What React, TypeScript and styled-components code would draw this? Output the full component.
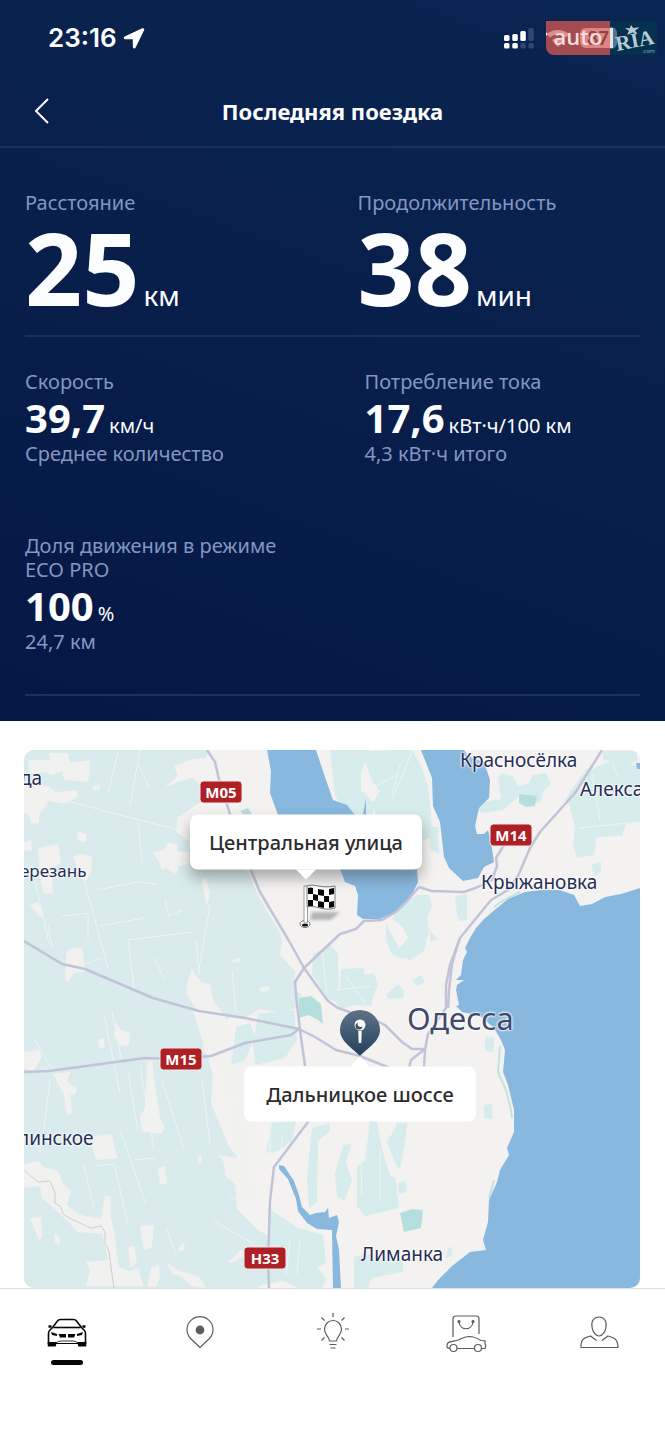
import React from "react";
import styled, { createGlobalStyle } from "styled-components";

const GlobalStyle = createGlobalStyle`
  *, *::before, *::after { box-sizing: border-box; }
  body {
    margin: 0;
    background: #ffffff;
    font-family: "Noto Sans", "Open Sans", sans-serif;
    -webkit-font-smoothing: antialiased;
  }
`;

const Page = styled.div`
  display: flex;
  flex-direction: column;
  min-height: 100vh;
`;

const Hero = styled.section`
  display: flex;
  flex-direction: column;
  padding-bottom: 25px;
  background: linear-gradient(200deg, #092551 0%, #091f4b 45%, #051745 100%);
  color: #fbfdff;
`;

const StatusBar = styled.div`
  display: flex;
  align-items: center;
  justify-content: space-between;
  height: 76px;
  padding: 0 8px 0 48px;
`;

const Clock = styled.div`
  display: flex;
  align-items: center;
  gap: 6px;
  font: 600 26px/32px Inter, Roboto, sans-serif;
`;

const StatusIcons = styled.div`
  display: flex;
  align-items: center;
  gap: 12px;
`;

const Watermark = styled.div`
  display: flex;
  height: 34px;
`;

const AutoPlate = styled.div`
  position: relative;
  display: flex;
  align-items: center;
  justify-content: center;
  width: 64px;
  background: #a24b50;
  border-radius: 0 0 0 8px;
  color: #f3dcdc;
  font: 600 22px/30px "Open Sans", sans-serif;

  svg {
    position: absolute;
    inset: 0;
  }
  span {
    position: relative;
    bottom: 2px;
  }
`;

const RiaPlate = styled.div`
  width: 47px;
  background: #053050;
`;

const Header = styled.header`
  display: grid;
  grid-template-columns: 32px 1fr 32px;
  align-items: center;
  height: 72px;
  padding: 0 26px;
  border-bottom: 2px solid #1d3159;
`;

const BackButton = styled.button`
  display: flex;
  justify-content: center;
  padding: 4px 0;
  border: 0;
  background: none;
  color: inherit;
`;

const Title = styled.h1`
  margin: 0;
  text-align: center;
  font-size: 22px;
  line-height: 32px;
  font-weight: 700;
`;

const StatGrid = styled.div<{ $gap: number; $top: number; $bottom: number }>`
  display: grid;
  grid-template-columns: 1fr 1fr;
  column-gap: ${(p) => p.$gap}px;
  row-gap: 68px;
  margin: 0 25px;
  padding: ${(p) => p.$top}px 0 ${(p) => p.$bottom}px;
  border-bottom: 2px solid #1b305c;
`;

const Stat = styled.div`
  display: flex;
  flex-direction: column;
`;

const StatLabel = styled.h2`
  margin: 0;
  font-size: 20px;
  line-height: 24px;
  font-weight: 400;
  color: #8496c2;
`;

const StatNote = styled.p`
  margin: 0;
  font-size: 20px;
  line-height: 24px;
  color: #8496c2;
`;

const StatValue = styled.div<{ $large?: boolean }>`
  display: flex;
  align-items: baseline;
  gap: 4px;
  white-space: nowrap;
  line-height: ${(p) => (p.$large ? 104 : 48)}px;

  strong {
    font-size: ${(p) => (p.$large ? 100 : 40)}px;
    font-weight: 700;
  }
  span {
    font-size: ${(p) => (p.$large ? 28 : 20)}px;
    line-height: 24px;
  }
`;

const MapSection = styled.main`
  padding: 29px 25px 0 24px;
`;

const MapFrame = styled.div`
  position: relative;
  aspect-ratio: 616 / 538;
  overflow: hidden;
  border-radius: 10px;
  background: #f3f2f1;

  > svg {
    display: block;
    width: 100%;
    height: 100%;
  }
`;

const MapItem = styled.div<{ $x: number; $y: number }>`
  position: absolute;
  left: ${(p) => ((p.$x - 24) / 616) * 100}%;
  top: ${(p) => ((p.$y - 750) / 538) * 100}%;
  white-space: nowrap;
`;

const Place = styled(MapItem)<{ $size?: number }>`
  transform: translateY(-50%);
  font-size: ${(p) => p.$size ?? 19}px;
  line-height: ${(p) => (p.$size === 31 ? 40 : 26)}px;
  color: ${(p) => (p.$size === 31 ? "#43496a" : "#272d55")};
  text-shadow: 0 0 2px #fff, 0 0 2px #fff, 0 0 3px #fff;
`;

const RoadBadge = styled(MapItem)`
  transform: translate(-50%, -50%);
  width: 43px;
  border: 1px solid #f4e9ea;
  border-radius: 4px;
  background: #ae2025;
  color: #ffffff;
  text-align: center;
  font-size: 15px;
  line-height: 21px;
  font-weight: 700;
`;

const Callout = styled(MapItem)<{ $up?: boolean }>`
  transform: translate(-50%, -50%);
  min-width: 232px;
  padding: 0 16px;
  border-radius: 8px;
  background: #ffffff;
  color: #2c2c2e;
  text-align: center;
  font-size: 20px;
  line-height: 55px;
  font-weight: 500;
  box-shadow: ${(p) => (p.$up ? "none" : "0 8px 14px rgba(60, 60, 60, 0.4)")};

  &::after {
    content: "";
    position: absolute;
    left: 50%;
    ${(p) => (p.$up ? "bottom" : "top")}: 100%;
    margin-left: -10px;
    border: 10px solid transparent;
    border-${(p) => (p.$up ? "bottom" : "top")}-color: #ffffff;
    border-${(p) => (p.$up ? "top" : "bottom")}: 0;
  }
`;

const TabBar = styled.nav`
  display: grid;
  grid-template-columns: repeat(5, 1fr);
  flex: 1;
  min-height: 100px;
  padding-top: 21px;
  border-top: 1px solid #dddddf;
  background: #ffffff;
`;

const Tab = styled.a<{ $active?: boolean }>`
  display: flex;
  flex-direction: column;
  align-items: center;
  gap: 6px;
  color: ${(p) => (p.$active ? "#060606" : "#5c5c5c")};

  &::after {
    content: "";
    width: 32px;
    height: 5px;
    border-radius: 3px;
    background: ${(p) => (p.$active ? "#060606" : "transparent")};
  }
`;

const LocationArrow = () => (
  <svg width="22" height="22" viewBox="0 0 22 22" aria-hidden="true">
    <path
      d="M19.500 2 2 10.200c-.8.4-.6 1.300.3 1.300l8.200.1.1 8.400c0 .9 1 1.100 1.400.2L20.400 3c.4-.8-.2-1.300-.9-1Z"
      fill="#fff"
      stroke="#fff"
      strokeWidth="1.500"
      strokeLinejoin="round"
    />
  </svg>
);

const Signal = () => (
  <svg width="32" height="22" viewBox="0 0 32 22" aria-hidden="true">
    <g fill="#fff">
      <rect x="2" y="8" width="5.500" height="6" rx="1.500" />
      <rect x="10.300" y="7" width="5.500" height="7" rx="1.500" />
      <rect x="18.300" y="4" width="5.500" height="10" rx="1.500" />
      <rect x="2" y="16" width="5.500" height="5.500" rx="1.500" />
      <rect x="10.300" y="16" width="5.500" height="5.500" rx="1.500" />
    </g>
    <g fill="#31476f">
      <rect x="26.300" y="1" width="5.500" height="13" rx="1.500" />
      <rect x="18.300" y="16" width="5.500" height="5.500" rx="1.500" />
      <rect x="26.300" y="16" width="5.500" height="5.500" rx="1.500" />
    </g>
  </svg>
);

const ParkingAuto = () => (
  <AutoPlate>
    <svg width="64" height="34" viewBox="0 0 64 34" aria-hidden="true">
      <path d="M1 13a17 17 0 0 1 22 0l-3 3.400a12.500 12.500 0 0 0-16 0ZM6 19a9.500 9.500 0 0 1 12 0l-6 7Z" fill="#e08d8e" />
      <rect x="34" y="7" width="34" height="20" rx="6" fill="#dc8583" />
      <text x="41" y="24" fill="#963f40" fontFamily="Inter" fontWeight="600" fontSize="18">87</text>
      <circle cx="0" cy="13" r="1.500" fill="#fff" />
    </svg>
    <span>auto</span>
  </AutoPlate>
);

const Ria = () => (
  <RiaPlate>
    <svg width="47" height="34" viewBox="0 0 47 34" role="img" aria-label="RIA.com">
      <path d="M0 6h1c4 0 6 3 6 6v10c0 3-3 6-6 6H0Z" fill="#58738a" />
      <rect x="0" y="7" width="3" height="20" fill="#dfe8ec" />
      <text x="7" y="30" transform="rotate(-11 7 30)" fill="#b5cbd3" fontFamily="Liberation Serif" fontWeight="700" fontSize="21">RIA</text>
      <path d="m21 4 2.200 3 6.300-.7-4.500 3.500 2.500 3-5-1.300-5.500 2.500 2-4.200-4-2.800 4.800.2Z" fill="#b5cbd3" />
      <text x="32" y="32" fill="#8fabb9" fontFamily="Open Sans" fontStyle="italic" fontSize="6">.com</text>
    </svg>
  </RiaPlate>
);

const fieldPatches = [
  "M28 760h22v-7h18l2 10 20-3v12l-2 10-24-2-2-9-10 4-8-3-14 2Z",
  "M24 784l24 2 8 6 20-2 2 6-12 8-18-3-3 6-6 8v8l-8 1-2-10-5-1Z",
  "M78 832l8 2 1 6-4 2-6-3Z",
  "M24 842l7-2 1 10-8 1Z",
  "M38 848l20-4 3 18-9 7 1 24-9 1-4-16Z",
  "M73 857l8-3 11 2-1 18-6 8-5-8Z",
  "M30 905l8-3 6 12-3 4Z",
  "M66 952l6-4 10-1 2 13 1 12-11 1-6 9-3-2 1-16Z",
  "M92 787l8-3v6l-6 1Z",
  "M152 852l12-2 4-8 9 3v6l12 1v12l-10 2-3 8-10-6-4 2-4-10Z",
  "M188 980l4-12 4 8 6 6 8 2 4 18 10 12 12 34 12 12-4 8-6 28-14-4-4-22-9-14-7-4-4-38-14-20Z",
  "M202 880l4-3 4 16-3 14-3-14Z",
  "M98 1040l6-2 1 9-6 1Z",
  "M116 1022l5 8 9 3-1 12-9 1-6-10Z",
  "M24 1052l16-2 2 8-10 14-8-4Z",
  "M53 1074l18-2-4 10 10 6-2 6-5 1 2 18-5 2-3-20Z",
  "M147 1062l5-2 5 40 3 18 5 10-3 6-20-3-2-15 5-8Z",
  "M94 1136l18-2 3 15 3 9-22 2-4-14Z",
  "M158 1168l7-2 2 17-7 2Z",
  "M24 1164l14-3 6 6 14 4 5 12 8 8-4 14 14 10 20 4 4-24 6 2-1 18 4 14 3 24 2 14 10 4 10-3 4 18H86l4-16-4-8 22-2-6-26-24-2-20-20-16-14-2-12-16 2Z",
  "M30 1218l11-1 1 20-3 3Z",
  "M54 1233l6 4v8l-5-2Z",
  "M128 1247l6-2 3 17-6 6Z",
  "M140 1226l14-1-2 22-8 3Z",
  "M151 1268l8-3 1 12-4 10-9-1Z",
  "M166 1262l14 9 18 5 8 12-14-2-12-10-8-2Z",
  "M178 1248l6-6 1 8-5 2Z",
  "M198 1156l4-1-1 9-3-1Z",
  "M212 1092l5-2v14l-4 2Z",
  "M228 1097l8-2 5 30 12 6-4 34 3 16 6 20-20-4-4-14-8-6-2-14-5-8 18 3-4-12Z",
  "M236 1180l10 4 4 14-14-8Z",
  "M228 1262l14-13 3 6-12 8Z",
  "M259 988l10-2v5l-9 1Z",
  "M232 960l8-2v4l-7 1Z",
];

const greenPatches = [
  "M330 750h40l-5 12-4 12v16l14 14-2 9-16 4-14-6-8-16Z",
  "M362 752l28-2h22l10 18 6 18 3 28 1 23-11 4-20-8-12-2-11-8-5-20 7-12-8-10Z",
  "M428 827h10l1 27-8-4Z",
  "M498 779l3-6 12 3 5 10 10-2 5-9 13-2 5 11-8 7-2 11-10 2-12-8-16 14-22 3-4-7 12-5 12-2Z",
  "M585 770l35-12 20 10v54l-14 2-4 12-26 1-2 18-17 3-4-14 2-16-6-24-4-4Z",
  "M603 751h34v10l-14 3-20-5Z",
  "M591 865l10-3v10l-6 4Z",
  "M455 896l12-2v26l-7 1-3-7Z",
  "M407 902l10-7 12 0 3 12-5 10 2 14-5 20-14 9-11-4 0-7 9-11-6-12-10-7Z",
  "M386 924l14 26 3 9-12-6-5-13Z",
  "M430 931l8 8-8 3Z",
  "M341 969l22-1 2 7 9-2 4 12-5 12-2 9-17-1-14 4-8-14 8-4Z",
  "M313 955l16-11 9 10 1 48-10-2-17-26Z",
  "M386 995l12-11 6 6-1 8-14 1Z",
  "M412 980l9-5 4 7-9 4Z",
  "M236 1027l14-4 5 14-10 23-14 5 3-20Z",
  "M258 1014l36-4 3 30-12 18-30 7-2-20Z",
  "M343 1145l8-1-5 18 6 19-8 20-7-5-2-22Z",
  "M370 1121h7l5 28 8 26 6 4 3 29-34 8-8-10v-40l8-5Z",
  "M397 1123h10l-1 13-6 34-6-10-7-18 7-12Z",
  "M398 1183l8-3 1 12-8 2Z",
  "M272 1123l24-2-4 20-14 10-12 2Z",
  "M312 1128l18-5v8l-12 10-1 62-8 5-2-30Z",
  "M268 1208l30 20 25 7 3 28-20 10-36-4Z",
  "M354 1257l14-3 35 4v14l-31 6-4 10h-14Z",
  "M485 1036l10 2-2 14-8-1Z",
  "M484 1105l8-1 1 15-9-1Z",
  "M448 1249l4-3v10l-6 2Z",
];

const darkPatches = [
  "M519 794l18 2-2 10-9 1-7-4Z",
  "M400 1213l12-4 11 1-2 18-17 4Z",
  "M299 998l12-2 10 8 2 20-5-4-9-5-10 3Z",
  "M240 811l8-3 4 6-8 1Z",
];

const fieldLines = `M35 880l14 64M84 880l24 88M70 970l30-12M48 796l130 34M97 890l40-8 20 2M100 926l44-8
M128 940l64-8M128 940l6 48M134 975l-1 12M154 957l10 22M165 900l4 16 14-6M210 905l-12 70M138 765l12 24
M140 750l-10 55M118 752l-10 42M138 820l4 42M62 916l28-3M88 916v24M48 925l4 22M232 970l4 42M196 940l3 34
M104 1015l16 78M112 1012l10 50M140 1066l14 84M128 1070l10 62M162 1080l22 70M202 1080l8 64M50 1080l-8 64
M35 1040l16 28M60 1092l12-3M84 1165l10 44M94 1166l20-2 14 60M120 1130l26 74M134 1160l22-2M102 1265l18 4
M228 1112l20 28M212 1220l42 24M230 1196l40 26M290 1240l-4 36M300 1240l-3 34M166 1228l10 26M40 1140v12
M400 765l-8 30M412 752l-20 48M368 790l30-16M592 773l8 48M578 828l62-6M613 764l5 14M570 780l36-18
M270 1120v40M283 1135l-6 40M380 1150v50M360 1140l2 56M345 975l20 28M335 990l36-4M322 950l5 44`;

const MapArt = () => (
  <svg viewBox="24 750 616 538" preserveAspectRatio="none" aria-hidden="true">
    <defs>
      <linearGradient id="pinFill" x1="0" y1="0" x2="0" y2="1">
        <stop offset="0" stopColor="#5e7388" />
        <stop offset="1" stopColor="#23405c" />
      </linearGradient>
      <filter id="soft" x="-30%" y="-30%" width="160%" height="160%">
        <feGaussianBlur stdDeviation="1.500" />
      </filter>
    </defs>
    <rect x="24" y="750" width="616" height="538" fill="#f3f2f1" />
    <path
      d="M24 750H208l-2 8-14 1-18 7 4 10-14 12 14-6 14-4 12 10-4 14-22 16-2 14 20 14 22-1 16 6 14 22 12 26 12 20 8 14 2 8-2 14 15 16-1 18 8 6-1 12-10 2-6 4-26-4-16 10-8-2-18 4-12-8-12-2 14 44 6 20-2 28 18 44 14 16-8 20 2 26 22 22 30 14 28 22 10 12-10 18-34-16-22 4-14 12v13H24Z"
      fill="#d9ebec"
    />
    <g fill="#f1f1ef">{fieldPatches.map((d) => <path key={d} d={d} />)}</g>
    <g fill="#d7ecec">{greenPatches.map((d) => <path key={d} d={d} />)}</g>
    <g fill="#b5dedf">{darkPatches.map((d) => <path key={d} d={d} />)}</g>
    <path d={fieldLines} fill="none" stroke="#eff5f4" strokeWidth="1" />
    <g fill="#89b8df">
      <path d="M267 750h49l10 30 7 20 14 5 8 10H278l-8-22 1-22Z" />
      <path d="m363 814 3-15v16Z" />
      <path d="M421 750H464L468 756 484 762 490 780 489 798 479 808 475 826 477 834 484 834 488 830 491 842 494 862 484 867 478 878 463 881 449 868 444 857 440 822 433 806 432 778Z" />
      <path d="M340 869h77L418 882 410 899 396 912 380 919 363 919 357 915 358 895 355 886 345 882Z" />
      <path d="M640 888 621 894 605 897 592 904 580 906 574 895 560 890 540 890 525 892 508 899 497 908 484 919 476 928 470 938 465 948 467 952 463 960 461 975 456 980 464 980 457 985 456 990 459 1005 456 1006 462 1012 480 1016 494 1028 501 1040 505 1050 503 1072 508 1085 514 1110 514 1132 507 1148 509 1155 500 1170 497 1182 489 1200 488 1222 483 1240 486 1250 470 1252 452 1266 438 1280 432 1288H640Z" />
      <path d="M279 1165l5 1 10 15 5 14 3 12 8 8 6-2 9-1 3-4 1 10 8-3 2 7-3 14 3 14 2 38h-8l-1-58-15-1-10-6-9-12-2-12-8-20-9-10Z" />
      <path d="M636 763h4v6h-3Z" />
    </g>
    <path d="M500 1046 498 1072 506 1090 511 1110 512 1118M494 1180 489 1198M520 892 502 901 494 907" fill="none" stroke="#c3e3e2" strokeWidth="2" />
    <path d="M24 1170l14 12 12-1 5 12 0 10 6 4 2 7 8 5 20 9 10-2 4 6v11l4 8 2 16 3 21" fill="none" stroke="#cfcfd2" strokeWidth="1" />
    <g fill="none" stroke="#c2c3d9" strokeWidth="2.500" strokeLinejoin="round">
      <path d="M207 750 215 762 220 784 228 808 240 844 260 892 289 941 304 968 328 1001 338 1008 355 1014 375 1020 385 1025 402 1042 412 1049 425 1049 411 1060 409 1068" />
      <path d="M24 941l38 23 23 5 68 29 46 13 46 7 54 11 16 8 21 13 24 6 30 12" />
      <path d="M24 1072l25-1 96-13 30 1 36-3 34-13 46-8 8-6" />
      <path d="M419 887 432 891 464 892 478 887 492 880 497 866 496 858 507 840" />
      <path d="M419 887 408 900 396 912 382 920 364 921 356 929 340 934 304 968 295 982 296 995 300 1030 305 1066" />
      <path d="M602 750 575 793 540 832 530 848 518 876 508 890 491 900 460 938 450 965 446 985 446 1008 428 1034 425 1050 424 1068" />
      <path d="M459 940 452 964 449 990 448 1008" />
      <path d="M308 1122l-34 45-4 34-2 60 1 27" />
    </g>

    <path d="M312 912h28l-9 8h-21Z" fill="#8e8e8e" opacity="0.6" filter="url(#soft)" />
    <ellipse cx="305" cy="924" rx="5" ry="3.500" fill="#fff" stroke="#777" />
    <ellipse cx="305" cy="925" rx="3" ry="1.500" fill="#111" />
    <path d="M304 886h3.500v37H304Z" fill="#fff" stroke="#888" strokeWidth=".8" />
    <path d="M307 886c8-3 12 3 28 0v22c-12 4-20-4-28-1Z" fill="#fff" stroke="#777" />
    <path d="M308 888q3-1 5 0v6l-5 0ZM318 889l6 1v6l-6-1ZM329 889l5-1v6l-5 1ZM313 894l5 1v6l-5-1ZM324 896h5v6h-5ZM308 900l5 0v6l-5 0ZM318 901l6 1v6l-6-1ZM329 902l5-1v6l-5 1Z" fill="#080808" />
    <path d="M360 1056c-5-6-20-14-20-26a20 20 0 0 1 40 0c0 12-15 20-20 26Z" fill="url(#pinFill)" />
    <path d="M358.300 1031h3.400l-.4 12h-2.600Z" fill="#fff" />
    <circle cx="360" cy="1025" r="5.500" fill="#fff" />
    <circle cx="359" cy="1026" r="3.500" fill="#3b5064" />
    <circle cx="361" cy="1023.500" r="3.500" fill="#fff" />
  </svg>
);

const icon = { width: 48, height: 44, viewBox: "0 0 48 44", fill: "none", stroke: "currentColor", strokeWidth: 1.2 } as const;

const CarIcon = () => (
  <svg {...icon} strokeWidth={1.600} strokeLinejoin="round" aria-hidden="true">
    <path d="M9.500 17.500 14.500 11q1-1.500 3-1.500h13q2 0 3 1.500l5 6.500" />
    <path d="M10.500 17.500h27" />
    <path d="M5.500 34V23.500q0-2 1.500-3.500l3-3M42.500 34V23.500q0-2-1.500-3.500l-3-3" />
    <path d="M5.500 16.500h3M39.500 16.500h3" strokeWidth="2.400" />
    <path d="M6 33.500h36" strokeWidth="1.200" />
    <path d="M13 33q2-2 5-2h12q3 0 5 2" strokeWidth=".8" />
    <path d="M4.700 32h9l-1 4.500h-8ZM43.300 32h-9l1 4.500h8Z" fill="currentColor" stroke="none" />
    <path d="m8 22 6 2v2l-5-1ZM40 22l-6 2v2l5-1ZM15.500 24h7.500v3.500h-6ZM32.500 24H25v3.500h6Z" fill="currentColor" stroke="none" />
  </svg>
);

const PinIcon = () => (
  <svg {...icon} aria-hidden="true">
    <path d="M24 37.500 14.500 28.500A13 13 0 1 1 33.500 28.500Z" />
    <circle cx="24" cy="20" r="3.800" fill="currentColor" />
  </svg>
);

const BulbIcon = () => (
  <svg {...icon} aria-hidden="true">
    <path d="M20.500 31c-1-6-5-6-5-12a8.500 8.500 0 0 1 17 0c0 6-4 6-5 12ZM20.500 34.500h7M21.500 38h5" />
    <path d="M24 3v4M12.500 7.500l3 3M35.500 7.500l-3 3M8 19h4M36 19h4M12.500 30.500l3-3M35.500 30.500l-3-3" />
  </svg>
);

const ShopIcon = () => (
  <svg {...icon} aria-hidden="true">
    <path d="M11 27V9q0-3 3-3h20q3 0 3 3v15" />
    <path d="M17 12c1 9 13 9 14 0" />
    <circle cx="17" cy="11.500" r="1" fill="currentColor" />
    <circle cx="31" cy="11.500" r="1" fill="currentColor" />
    <path d="M8 38.500c-2.500-.3-3.500-.8-3-3 0-4 4-4 10-5 3-1 6-4 12-4 6 .2 9 2 12 4l4 .3v3l.8 2-.8 2.700H39.500M15 38.500h17.500" />
    <circle cx="11.500" cy="38" r="3.500" />
    <circle cx="36" cy="38" r="3.500" />
  </svg>
);

const PersonIcon = () => (
  <svg {...icon} aria-hidden="true">
    <path d="M24 7c5 0 8 4 7 10-.5 5-4 9-7 9s-6.500-4-7-9c-1-6 2-10 7-10Z" />
    <path d="M21.500 30.500l-6-4.500c-6 1.500-10 3-9.500 11.500h37C43 29 39 27.500 33 26l-6 4.500" />
  </svg>
);

const places = [
  { text: "да", x: 20, y: 778 },
  { text: "ерезань", x: 20, y: 871, size: 17 },
  { text: "линское", x: 18, y: 1138 },
  { text: "Красносёлка", x: 460, y: 760 },
  { text: "Александровка", x: 580, y: 789 },
  { text: "Крыжановка", x: 481, y: 882 },
  { text: "Лиманка", x: 361, y: 1254 },
  { text: "Одесса", x: 407, y: 1018, size: 31 },
];

const roads = [
  { text: "M05", x: 221, y: 792 },
  { text: "M14", x: 511, y: 835 },
  { text: "M15", x: 181, y: 1059 },
  { text: "H33", x: 265, y: 1258 },
];

const tabs = [
  { name: "Автомобиль", Icon: CarIcon },
  { name: "Карта", Icon: PinIcon },
  { name: "Советы", Icon: BulbIcon },
  { name: "Магазин", Icon: ShopIcon },
  { name: "Профиль", Icon: PersonIcon },
];

export default function App() {
  return (
    <Page>
      <GlobalStyle />
      <Hero>
        <StatusBar>
          <Clock>
            23:16
            <LocationArrow />
          </Clock>
          <StatusIcons>
            <Signal />
            <Watermark>
              <ParkingAuto />
              <Ria />
            </Watermark>
          </StatusIcons>
        </StatusBar>
        <Header>
          <BackButton type="button" aria-label="Назад">
            <svg width="16" height="26" viewBox="0 0 16 26" fill="none" stroke="currentColor" strokeWidth="2">
              <path d="M14 1 2 13l12 12" />
            </svg>
          </BackButton>
          <Title>Последняя поездка</Title>
        </Header>
        <StatGrid $gap={50} $top={43} $bottom={16}>
          <Stat>
            <StatLabel>Расстояние</StatLabel>
            <StatValue $large>
              <strong>25</strong>
              <span>км</span>
            </StatValue>
          </Stat>
          <Stat>
            <StatLabel>Продолжительность</StatLabel>
            <StatValue $large>
              <strong>38</strong>
              <span>мин</span>
            </StatValue>
          </Stat>
        </StatGrid>
        <StatGrid $gap={64} $top={33} $bottom={40}>
          <Stat>
            <StatLabel>Скорость</StatLabel>
            <StatValue>
              <strong>39,7</strong>
              <span>км/ч</span>
            </StatValue>
            <StatNote>Среднее количество</StatNote>
          </Stat>
          <Stat>
            <StatLabel>Потребление тока</StatLabel>
            <StatValue>
              <strong>17,6</strong>
              <span>кВт·ч/100 км</span>
            </StatValue>
            <StatNote>4,3 кВт·ч итого</StatNote>
          </Stat>
          <Stat>
            <StatLabel>Доля движения в режиме ECO PRO</StatLabel>
            <StatValue>
              <strong>100</strong>
              <span>%</span>
            </StatValue>
            <StatNote>24,7 км</StatNote>
          </Stat>
        </StatGrid>
      </Hero>
      <MapSection>
        <MapFrame>
          <MapArt />
          {places.map((p) => (
            <Place key={p.text} $x={p.x} $y={p.y} $size={p.size}>
              {p.text}
            </Place>
          ))}
          {roads.map((r) => (
            <RoadBadge key={r.text} $x={r.x} $y={r.y}>
              {r.text}
            </RoadBadge>
          ))}
          <Callout $x={306} $y={842}>Центральная улица</Callout>
          <Callout $x={360} $y={1094} $up>
            Дальницкое шоссе
          </Callout>
        </MapFrame>
      </MapSection>
      <TabBar>
        {tabs.map(({ name, Icon }, i) => (
          <Tab key={name} href="#" aria-label={name} $active={i === 0}>
            <Icon />
          </Tab>
        ))}
      </TabBar>
    </Page>
  );
}
